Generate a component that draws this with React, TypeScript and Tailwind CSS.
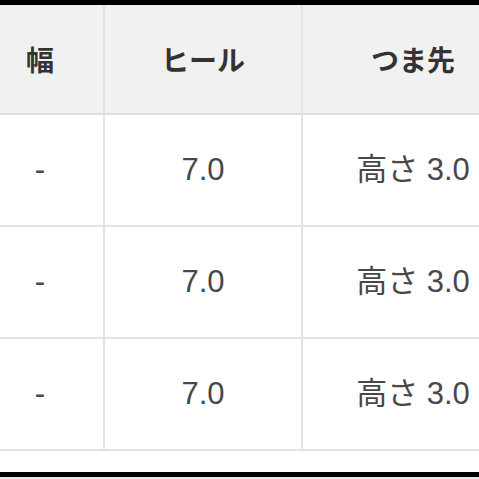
export default function App() {
  const rows = [
    { width: "-", heel: "7.0", toe: "高さ 3.0" },
    { width: "-", heel: "7.0", toe: "高さ 3.0" },
    { width: "-", heel: "7.0", toe: "高さ 3.0" },
  ];

  return (
    <div
      className="w-[479px] h-[479px] overflow-hidden bg-white flex flex-col"
      style={{ fontFamily: '"Noto Sans CJK JP", "Noto Sans", sans-serif' }}
    >
      <div className="h-[5px] bg-black shrink-0" />

      <div className="-ml-[23px] w-[544px] shrink-0">
        {/* header */}
        <div className="grid grid-cols-[128px_198px_218px] h-[110px] bg-[#f1f1f1] border-b-2 border-[#dedede]">
          <div className="flex items-center justify-center border-r-2 border-[#e2e2e2] text-[28px] font-bold text-[#333]">
            幅
          </div>
          <div className="flex items-center justify-center border-r-2 border-[#e2e2e2] text-[28px] font-bold text-[#333]">
            ヒール
          </div>
          <div className="flex items-center justify-center text-[28px] font-bold text-[#333] pl-[2px]">
            つま先
          </div>
        </div>

        {/* body */}
        {rows.map((r, i) => (
          <div
            key={i}
            className="grid grid-cols-[128px_198px_218px] h-[112px] border-b-2 border-[#e2e2e2] text-[31px] text-[#484848]"
            style={{ fontFamily: '"Liberation Sans", "Noto Sans CJK JP", sans-serif' }}
          >
            <div className="flex items-center justify-center border-r-2 border-[#e2e2e2]">
              {r.width}
            </div>
            <div className="flex items-center justify-center border-r-2 border-[#e2e2e2]">
              {r.heel}
            </div>
            <div className="flex items-center justify-center pl-[2px] whitespace-pre">
              {r.toe}
            </div>
          </div>
        ))}
      </div>

      <div className="h-[21px] shrink-0" />
      <div className="h-[5px] bg-black shrink-0" />
      <div className="flex-1 bg-[#e8e8e8]" />
    </div>
  );
}
